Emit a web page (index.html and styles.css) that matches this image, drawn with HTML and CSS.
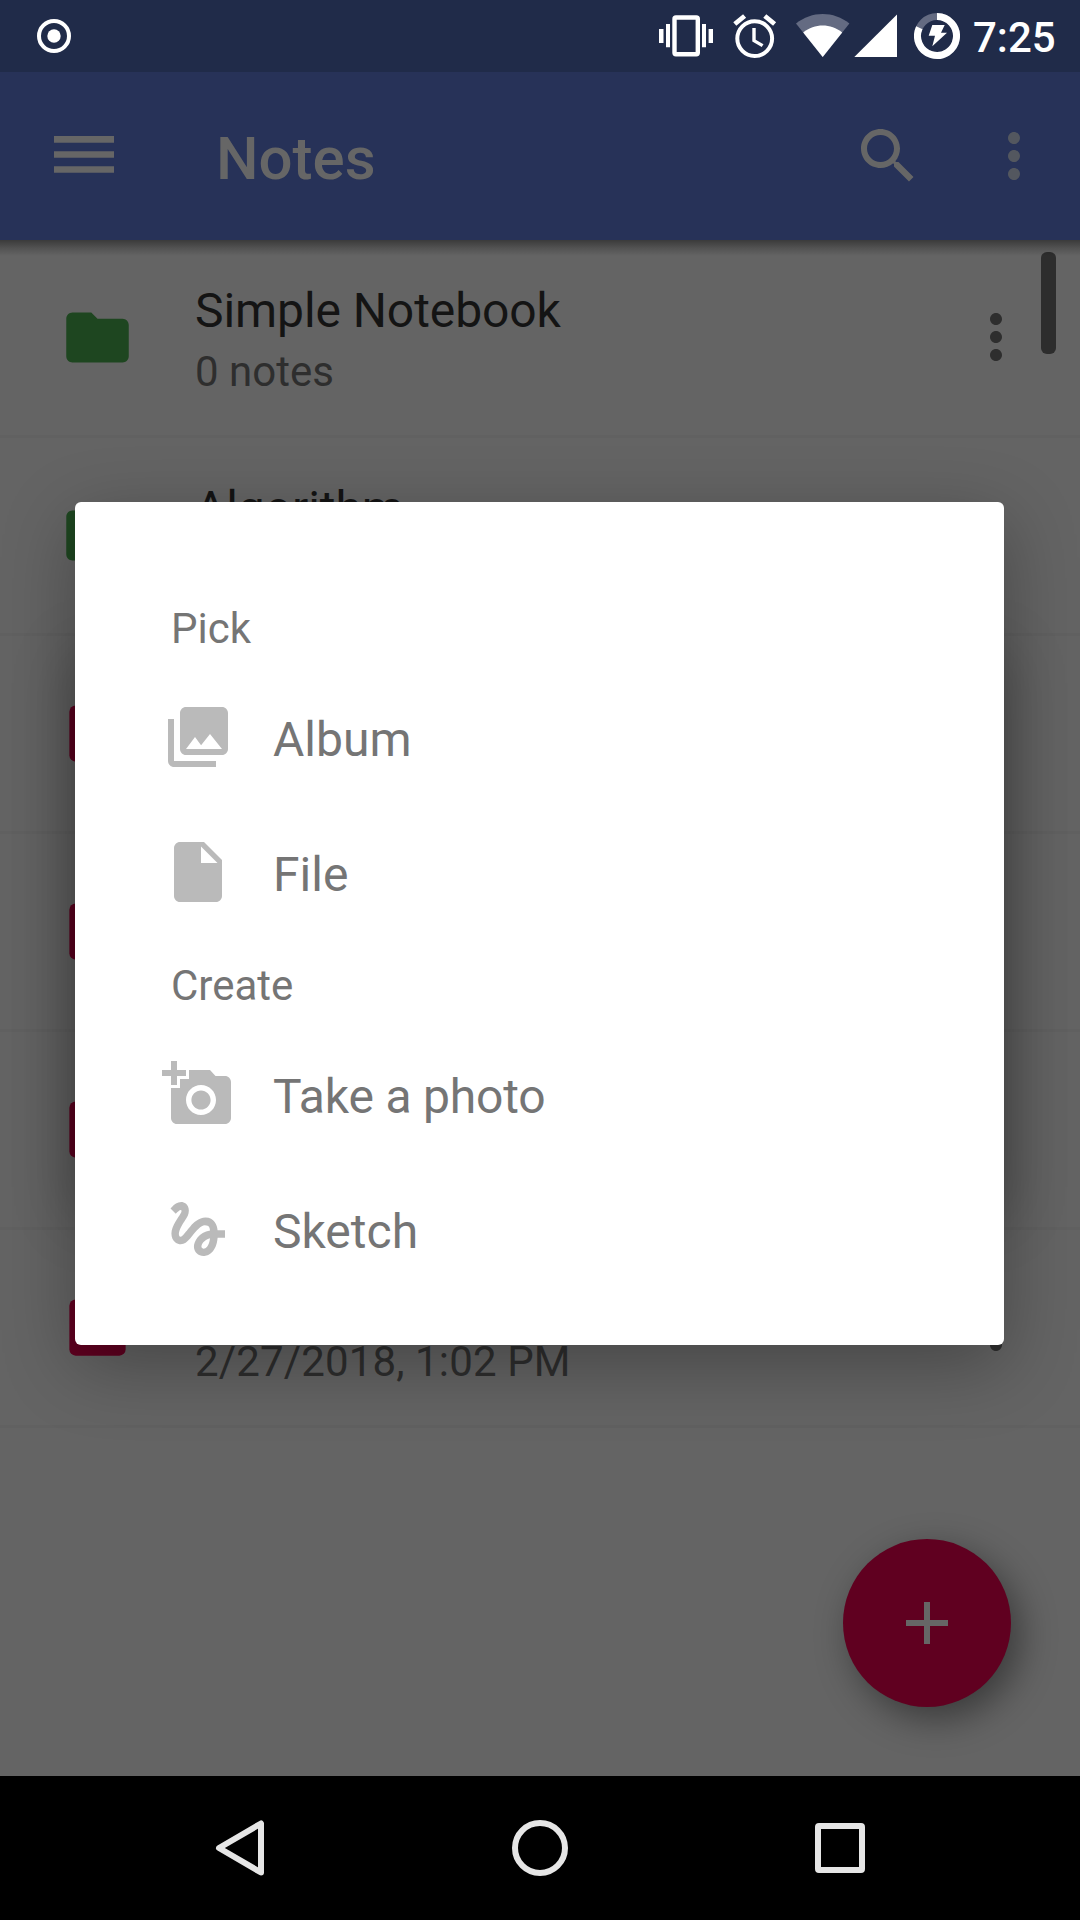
FILE: index.html
```html
<!DOCTYPE html>
<html lang="en">
<head>
<meta charset="utf-8">
<title>Notes</title>
<link rel="stylesheet" href="styles.css">
</head>
<body>
<svg class="defs" width="0" height="0">
  <symbol id="dots" viewBox="0 0 24 24"><path d="M12 8c1.1 0 2-.9 2-2s-.9-2-2-2-2 .9-2 2 .9 2 2 2zm0 2c-1.1 0-2 .9-2 2s.9 2 2 2 2-.9 2-2-.9-2-2-2zm0 6c-1.1 0-2 .9-2 2s.9 2 2 2 2-.9 2-2-.9-2-2-2z"/></symbol>
  <symbol id="folder" viewBox="0 0 24 24"><path d="M10 4H4c-1.1 0-1.99.9-1.99 2L2 18c0 1.1.9 2 2 2h16c1.1 0 2-.9 2-2V8c0-1.1-.9-2-2-2h-8l-2-2z"/></symbol>
  <symbol id="note" viewBox="0 0 24 24"><rect x="3" y="3" width="18" height="18" rx="2"/></symbol>
</svg>
<div class="screen">
  <header class="status">
    <svg class="record" width="34" height="72" viewBox="37 0 34 72"><circle cx="54" cy="36" r="15" fill="none" stroke="#fff" stroke-width="4"/><circle cx="54" cy="36" r="6.7" fill="#fff"/></svg>
    <svg class="vibrate" width="54" height="72" viewBox="659 0 54 72" fill="#fff"><path d="M659 29h4.5v14H659zM666 24h4v23.3h-4zM702 24h4v23.3h-4zM708.6 29h4.4v14h-4.4z"/><rect x="674.5" y="17.5" width="23.3" height="36.8" rx="1.5" fill="none" stroke="#fff" stroke-width="4.4"/></svg>
    <svg class="alarm" width="44" height="72" viewBox="733 0 44 72" fill="none" stroke="#fff"><circle cx="754.7" cy="38.6" r="17.4" stroke-width="4"/><path d="M754 28v12.6l8.6 5" stroke-width="3.4"/><path d="M734.8 24l9.8-8M774.6 24l-9.8-8" stroke-width="4.8"/></svg>
    <svg class="wifi" width="54" height="72" viewBox="796 0 54 72"><path d="M822.7 57L796 23.6C811.500 10.800 833.900 10.800 849.4 23.600Z" fill="#646b82"/><path d="M822.7 57l-19.500-24.500c11.500-9.300 27.500-9.300 39 0Z" fill="#fff"/></svg>
    <svg class="signal" width="43" height="72" viewBox="854 0 43 72"><path d="M854.300 57H897V14.500Z" fill="#fff"/></svg>
    <svg class="battery" width="46" height="72" viewBox="914 0 46 72"><circle cx="937" cy="36" r="19.500" fill="none" stroke="#646b82" stroke-width="7"/><path d="M937 16.500A19.500 19.500 0 1 1 919.330 27.760" fill="none" stroke="#fff" stroke-width="7"/><path d="M932.300 25h12.400l-3.700 7.700h6l-14.700 13.600 2.700-10.600h-6.300Z" fill="#fff"/></svg>
    <span class="clock">7:25</span>
  </header>
  <div class="appbar">
    <svg class="menu" width="60" height="37" viewBox="0 0 60 37"><path d="M0 0h60v6.700H0zM0 15.200h60v6.500H0zM0 30.200h60v6.600H0z"/></svg>
    <h1 class="title">Notes</h1>
    <svg class="search" width="72" height="72" viewBox="0 0 24 24"><path d="M15.500 14h-.790l-.280-.270C15.410 12.590 16 11.110 16 9.500 16 5.910 13.090 3 9.500 3S3 5.910 3 9.500 5.910 16 9.500 16c1.610 0 3.090-.590 4.230-1.570l.270.280v.790l5 4.990L20.490 19l-4.990-5zm-6 0C7.010 14 5 11.990 5 9.500S7.010 5 9.500 5 14 7.010 14 9.500 11.990 14 9.500 14z"/></svg>
    <svg class="overflow" width="72" height="72"><use href="#dots"/></svg>
  </div>
  <main class="list">
    <div class="row"><svg class="kind folder"><use href="#folder"/></svg><div class="text"><div class="name">Simple Notebook</div><div class="sub">0 notes</div></div><svg class="more"><use href="#dots"/></svg></div>
    <div class="row"><svg class="kind folder"><use href="#folder"/></svg><div class="text"><div class="name">Algorithm</div></div></div>
    <div class="row"><svg class="kind note"><use href="#note"/></svg></div>
    <div class="row"><svg class="kind note"><use href="#note"/></svg></div>
    <div class="row"><svg class="kind note"><use href="#note"/></svg></div>
    <div class="row last"><svg class="kind note"><use href="#note"/></svg><div class="text"><div class="sub">2/27/2018, 1:02 PM</div></div><svg class="more"><use href="#dots"/></svg></div>
    <div class="thumb"></div>
    <div class="fab"><svg width="72" height="72" viewBox="0 0 24 24"><path d="M19 13h-6v6h-2v-6H5v-2h6V5h2v6h6z"/></svg></div>
  </main>
  <nav class="nav">
    <svg width="60" height="60" viewBox="210 1818 60 60"><path d="M261 1823.500V1872.500L219 1848Z"/></svg>
    <svg width="60" height="60" viewBox="510 1818 60 60"><circle cx="540" cy="1848" r="25"/></svg>
    <svg width="60" height="60" viewBox="810 1818 60 60"><rect x="818" y="1826" width="44" height="44" rx="1"/></svg>
  </nav>
  <div class="side-shadow"></div>
  <section class="dialog">
    <h2 class="group">Pick</h2>
    <div class="item"><svg class="icon" viewBox="0 0 24 24"><path d="M22 16V4c0-1.100-.900-2-2-2H8c-1.100 0-2 .900-2 2v12c0 1.100.900 2 2 2h12c1.100 0 2-.900 2-2zm-11-4l2.030 2.710L16 11l4 5H8l3-4zM2 6v14c0 1.100.900 2 2 2h14v-2H4V6H2z"/></svg><span class="label">Album</span></div>
    <div class="item"><svg class="icon" viewBox="0 0 24 24"><path d="M6 2c-1.100 0-1.990.900-1.990 2L4 20c0 1.100.890 2 1.990 2H18c1.100 0 2-.900 2-2V8l-6-6H6zm7 7V3.500L18.500 9H13z"/></svg><span class="label">File</span></div>
    <h2 class="group">Create</h2>
    <div class="item"><svg class="icon" viewBox="0 0 24 24"><path d="M3 4V1h2v3h3v2H5v3H3V6H0V4h3zm3 6V7h3V4h7l1.830 2H21c1.100 0 2 .900 2 2v12c0 1.100-.900 2-2 2H5c-1.100 0-2-.900-2-2V10h3zm7 9c2.760 0 5-2.240 5-5s-2.240-5-5-5-5 2.240-5 5 2.240 5 5 5zm-3.200-5c0 1.770 1.430 3.200 3.200 3.200s3.200-1.430 3.200-3.200-1.430-3.200-3.200-3.200-3.200 1.430-3.200 3.200z"/></svg><span class="label tight">Take a photo</span></div>
    <div class="item"><svg class="icon" viewBox="0 0 24 24"><path d="M4.590 6.890c.700-.710 1.400-1.350 1.710-1.220.500.200 0 1.030-.300 1.520-.250.420-2.860 3.890-2.860 6.310 0 1.280.480 2.340 1.340 2.980.750.560 1.740.730 2.640.460 1.070-.310 1.950-1.400 3.060-2.770 1.210-1.490 2.830-3.440 4.080-3.440 1.630 0 1.650 1.010 1.760 1.790-3.780.640-5.380 3.670-5.380 5.370 0 1.700 1.440 3.090 3.210 3.090 1.630 0 4.290-1.330 4.690-6.100H21v-2.500h-2.470c-.150-1.650-1.090-4.200-4.030-4.200-2.250 0-4.180 1.910-4.940 2.840-.580.730-2.060 2.480-2.290 2.720-.250.300-.680.840-1.110.840-.450 0-.720-.830-.360-1.920.350-1.090 1.400-2.860 1.850-3.520.780-1.140 1.300-1.920 1.300-3.280C8.950 3.690 7.310 3 6.440 3 5.120 3 3.970 4 3.720 4.250c-.360.360-.660.660-.880.930l1.750 1.710zm9.290 11.660c-.310 0-.740-.260-.740-.720 0-.600.730-2.200 2.870-2.760-.300 2.690-1.430 3.480-2.130 3.480z"/></svg><span class="label">Sketch</span></div>
  </section>
</div>
</body>
</html>
```
FILE: styles.css
```css
* { box-sizing: border-box; }
body { margin: 0; background: #000; font-family: Roboto, sans-serif; }
h1, h2 { margin: 0; }
svg { display: block; flex: none; }
.defs { position: absolute; }
.screen { position: relative; width: 1080px; height: 1920px; overflow: hidden; display: flex; flex-direction: column; }

.status { height: 72px; flex: none; display: flex; align-items: center; padding-left: 37px; background: #202b49; }
.vibrate { margin-left: 588px; }
.alarm { margin-left: 20px; }
.wifi { margin-left: 19px; }
.signal { margin-left: 4px; }
.battery { margin-left: 17px; }
.clock { margin-left: 13px; padding-top: 3px; font-size: 42px; line-height: 49px; font-weight: 500; color: #fff; }

.appbar { position: relative; z-index: 1; height: 168px; flex: none; display: flex; align-items: center; padding: 0 30px 0 54px; background: #273258; fill: #666; }
.appbar::after { content: ""; position: absolute; left: 0; right: 0; top: 100%; height: 16px; background: linear-gradient(rgba(0,0,0,.42), rgba(0,0,0,.18) 50%, rgba(0,0,0,0)); }
.menu { margin-top: -3px; }
.title { margin-left: 102px; padding-top: 5px; font-size: 60px; line-height: 70px; font-weight: 500; color: #666; }
.search { margin-left: auto; }
.overflow { margin-left: 54px; fill: #53575f; }

.list { position: relative; flex: 1; background: #646464; }
.row { height: 198px; display: flex; border-bottom: 3px solid #616161; padding-left: 60px; }
.kind { width: 75px; height: 75px; margin: 60px 1px 0 0; }
.folder { fill: #1e4620; }
.note { fill: #600020; }
.text { margin-left: 59px; padding-top: 43px; }
.name { font-size: 48px; line-height: 56px; letter-spacing: -.08px; color: #141414; }
.sub { font-size: 42px; line-height: 66px; color: #2e2e2e; }
.last .sub { margin-top: 56px; letter-spacing: .14px; }
.more { width: 72px; height: 72px; margin: 61px 48px 0 auto; fill: #2e2e2e; }
.thumb { position: absolute; right: 24px; top: 12px; width: 15px; height: 102px; border-radius: 6px; background: #2d2d2d; }
.fab { position: absolute; right: 69px; bottom: 69px; width: 168px; height: 168px; border-radius: 50%; display: grid; place-items: center; background: #600020; fill: #666; box-shadow: 9px 12px 36px rgba(0,0,0,.42); }

.nav { height: 144px; flex: none; display: flex; justify-content: center; align-items: center; gap: 240px; background: #000; fill: none; stroke: #e6e6e6; stroke-width: 6; stroke-linejoin: round; }

.side-shadow { position: absolute; z-index: 2; left: 75px; top: 655px; width: 929px; height: 560px; box-shadow: 0 0 56px rgba(0,0,0,.25); }
.dialog { position: absolute; z-index: 2; left: 75px; top: 502px; width: 929px; height: 843px; padding: 80px 87px 49px; border-radius: 6px; background: #fff; box-shadow: 0 20px 72px rgba(0,0,0,.3); }
.group { height: 87px; padding: 6px 0 0 9px; font-size: 42px; line-height: 81px; font-weight: 400; color: #757575; }
.item { height: 135px; display: flex; align-items: center; }
.icon { width: 72px; height: 72px; fill: #bababa; }
.label { margin-left: 39px; padding-top: 6px; font-size: 48px; line-height: 56px; color: #757575; }
.tight { letter-spacing: -.18px; }
```
